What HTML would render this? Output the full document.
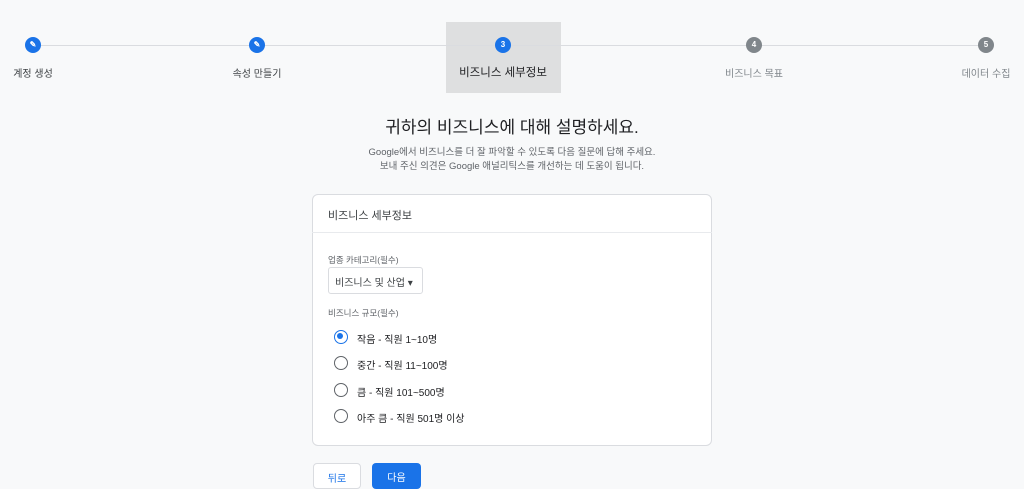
<!DOCTYPE html><html><head><meta charset="utf-8"><style>
*{margin:0;padding:0;box-sizing:border-box}
body{width:1024px;height:482px;overflow:hidden;background:#f8f9fa;font-family:"Liberation Sans","Noto Sans CJK KR",sans-serif;color:#202124;position:relative}
.a{position:absolute}
.line{position:absolute;top:45px;height:1px;background:#dadce0}
.c{position:absolute;width:16px;height:16px;border-radius:50%;top:37px;color:#fff;font-size:8px;text-align:center;line-height:16px;font-weight:bold}
.lbl{position:absolute;top:65px;font-size:10px;color:#3c4043;white-space:nowrap;transform:translateX(-50%)}
.r{position:absolute;left:334px;width:14px;height:14px;border:1.8px solid #5f6368;border-radius:50%}
.rt{position:absolute;left:357px;font-size:10px;color:#202124;white-space:nowrap}
</style></head><body>
<div class="a" style="left:446px;top:22px;width:115px;height:71px;background:#dedfe0"></div>
<div class="line" style="left:41px;width:937px"></div>
<div class="c" style="left:25px;background:#1a73e8">✎</div>
<div class="c" style="left:249px;background:#1a73e8">✎</div>
<div class="c" style="left:495px;background:#1a73e8">3</div>
<div class="c" style="left:746px;background:#80868b">4</div>
<div class="c" style="left:978px;background:#80868b">5</div>
<div class="lbl" style="left:33px">계정 생성</div>
<div class="lbl" style="left:257px">속성 만들기</div>
<div class="lbl" style="left:503px;top:64px;font-size:11.5px;color:#202124">비즈니스 세부정보</div>
<div class="lbl" style="left:754px;color:#80868b">비즈니스 목표</div>
<div class="lbl" style="left:986px;color:#80868b">데이터 수집</div>
<div class="a" style="left:0;width:1024px;top:113px;text-align:center;font-size:17px;color:#202124">귀하의 비즈니스에 대해 설명하세요.</div>
<div class="a" style="left:0;width:1024px;top:146px;text-align:center;font-size:9.5px;line-height:14px;color:#5f6368">Google에서 비즈니스를 더 잘 파악할 수 있도록 다음 질문에 답해 주세요.<br>보내 주신 의견은 Google 애널리틱스를 개선하는 데 도움이 됩니다.</div>
<div class="a" style="left:312px;top:194px;width:400px;height:252px;background:#fff;border:1px solid #dadce0;border-radius:6px"></div>
<div class="a" style="left:312px;top:232px;width:400px;height:1px;background:#e8eaed"></div>
<div class="a" style="left:328px;top:207px;font-size:11px;color:#3c4043">비즈니스 세부정보</div>
<div class="a" style="left:328px;top:254px;font-size:8.5px;color:#5f6368">업종 카테고리(필수)</div>
<div class="a" style="left:328px;top:267px;width:95px;height:27px;border:1px solid #dadce0;border-radius:3px;font-size:10px;padding:6px 0 0 6px;color:#3c4043">비즈니스 및 산업 ▾</div>
<div class="a" style="left:328px;top:307px;font-size:8.5px;color:#5f6368">비즈니스 규모(필수)</div>
<div class="r" style="top:330px;border-color:#1a73e8"><div style="position:absolute;left:2.2px;top:2.2px;width:6px;height:6px;border-radius:50%;background:#1a73e8"></div></div>
<div class="r" style="top:356px"></div>
<div class="r" style="top:383px"></div>
<div class="r" style="top:409px"></div>
<div class="rt" style="top:331px">작음 - 직원 1~10명</div>
<div class="rt" style="top:357px">중간 - 직원 11~100명</div>
<div class="rt" style="top:384px">큼 - 직원 101~500명</div>
<div class="rt" style="top:410px">아주 큼 - 직원 501명 이상</div>
<div class="a" style="left:313px;top:463px;width:48px;height:26px;border:1px solid #dadce0;border-radius:4px;background:#fff;font-size:10px;color:#1a73e8;text-align:center;padding-top:6px">뒤로</div>
<div class="a" style="left:372px;top:463px;width:49px;height:26px;border-radius:4px;background:#1a73e8;font-size:10px;color:#fff;text-align:center;padding-top:6px">다음</div>
</body></html>
